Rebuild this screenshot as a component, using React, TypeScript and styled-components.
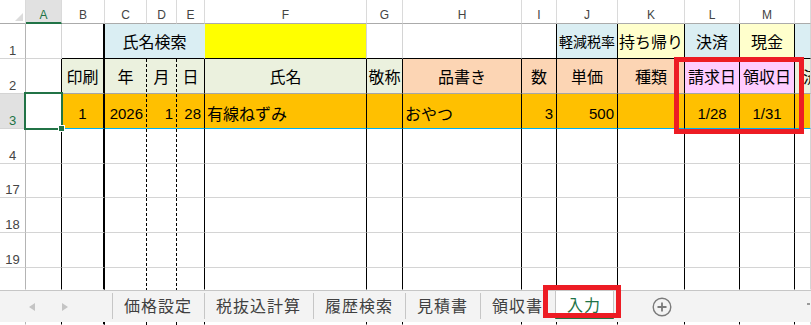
import React from "react";
import styled, { createGlobalStyle } from "styled-components";

const GREEN = "#217346";
const RED = "#ed1c24";
const GRID = "#d4d4d4";
const BLUE = "#daeef3";
const YELLOW = "#ffff00";
const CREAM = "#ffffcc";
const SAGE = "#ebf1de";
const PEACH = "#fcd5b4";
const PINK = "#ffccff";
const ORANGE = "#ffc000";

// row header + columns A..N (N is cut by the window)
const COLUMNS =
  "26px 36px 43px 42px 30px 28px 162px 36px 119px 35px 61px 67px 55px 55px 16px";
const LETTERS = ["A", "B", "C", "D", "E", "F", "G", "H", "I", "J", "K", "L", "M", ""];

type Edge = "grid" | "black" | "thick" | "dash" | "none" | "soft" | "cyan";
type Align = "left" | "center" | "right";

interface CellSpec {
  text?: string;
  bg?: string;
  right: Edge;
  bottom: Edge;
  align?: Align;
  num?: boolean;
  size?: number;
  span?: number;
  indent?: number;
}

// right edges of A..N below row 1
const DATA_RIGHT: Edge[] = [
  "black", "thick", "dash", "dash", "black", "black", "black",
  "black", "black", "black", "black", "black", "black", "grid",
];

const edge = (e: Edge) => {
  switch (e) {
    case "black":
      return "1px solid #000";
    case "thick":
      return "2px solid #000";
    case "soft":
      return "1px solid #a6a6a6";
    case "cyan":
      return "1px solid #00b0f0";
    case "dash":
    case "none":
      return "1px solid transparent";
    default:
      return `1px solid ${GRID}`;
  }
};

const GlobalStyle = createGlobalStyle`
  html, body {
    margin: 0;
    padding: 0;
    background: #fff;
    overflow: hidden;
  }
`;

const Sheet = styled.div`
  position: relative;
  width: 811px;
  height: 325px;
  overflow: hidden;
  background: #fff;
`;

const Row = styled.div<{ $h: number }>`
  display: grid;
  grid-template-columns: ${COLUMNS};
  height: ${(p) => p.$h}px;
`;

const Corner = styled.div`
  box-sizing: border-box;
  display: flex;
  align-items: flex-end;
  justify-content: flex-end;
  padding: 0 2px 2px 0;
  border-right: 1px solid #dadada;
  border-bottom: 1px solid #ababab;
`;

const ColHead = styled.div<{ $active?: boolean }>`
  box-sizing: border-box;
  display: flex;
  align-items: flex-end;
  justify-content: center;
  padding-bottom: ${(p) => (p.$active ? 1 : 2)}px;
  background: ${(p) => (p.$active ? "#e1e1e1" : "#fff")};
  color: ${(p) => (p.$active ? GREEN : "#444")};
  border-right: 1px solid #dadada;
  border-bottom: ${(p) => (p.$active ? `2px solid ${GREEN}` : "1px solid #ababab")};
  font: 12px/12px "Liberation Sans", Arial, sans-serif;
`;

const RowHead = styled.div<{ $active?: boolean; $open?: boolean }>`
  box-sizing: border-box;
  display: flex;
  align-items: flex-end;
  justify-content: center;
  padding-bottom: 1px;
  background: ${(p) => (p.$active ? "#e1e1e1" : "#fff")};
  color: ${(p) => (p.$active ? GREEN : "#444")};
  border-right: 1px solid #b4b4b4;
  border-bottom: 1px solid ${(p) => (p.$open ? "transparent" : GRID)};
  font: 13px/12px "Liberation Sans", Arial, sans-serif;
`;

const Cell = styled.div<{
  $bg?: string;
  $right: Edge;
  $bottom: Edge;
  $align?: Align;
  $num?: boolean;
  $size?: number;
  $span?: number;
  $indent?: number;
  $drop: number;
}>`
  box-sizing: border-box;
  grid-column: span ${(p) => p.$span ?? 1};
  display: flex;
  align-items: center;
  justify-content: ${(p) =>
    p.$align === "left" ? "flex-start" : p.$align === "right" ? "flex-end" : "center"};
  padding: ${(p) => p.$drop}px ${(p) => (p.$align === "right" ? 3 : 0)}px 0
    ${(p) => (p.$align === "left" ? p.$indent ?? 2 : 0)}px;
  overflow: hidden;
  white-space: nowrap;
  color: #000;
  font-family: ${(p) =>
    p.$num
      ? '"Liberation Sans", Arial, sans-serif'
      : '"Noto Sans CJK JP", "Noto Sans", sans-serif'};
  font-size: ${(p) => p.$size ?? (p.$num ? 15 : 16)}px;
  background: ${(p) =>
    p.$right === "dash"
      ? `linear-gradient(#000 3px, transparent 3px) right top / 1px 5px repeat-y, ${p.$bg ?? "#fff"}`
      : p.$bg ?? "#fff"};
  background-origin: border-box;
  border-right: ${(p) => edge(p.$right)};
  border-bottom: ${(p) => edge(p.$bottom)};
`;

const TabBar = styled.div`
  box-sizing: border-box;
  display: flex;
  align-items: stretch;
  height: 32px;
  background: #f3f3f3;
  border-top: 1px solid #c6c6c6;
  font-family: "Noto Sans CJK JP", "Noto Sans", sans-serif;
`;

const Nav = styled.div`
  box-sizing: border-box;
  width: 112px;
  display: flex;
  align-items: center;
  gap: 27px;
  padding-left: 29px;
`;

const Arrow = styled.span<{ $dir: "left" | "right" }>`
  width: 0;
  height: 0;
  border-top: 4px solid transparent;
  border-bottom: 4px solid transparent;
  ${(p) =>
    p.$dir === "left"
      ? "border-right: 6px solid #c4c4c4;"
      : "border-left: 6px solid #c4c4c4;"}
`;

const TabSep = styled.span`
  width: 1px;
  margin: 2px 0 3px;
  background: #c6c6c6;
`;

const Tab = styled.div`
  display: flex;
  align-items: center;
  padding: 0 12px 4px 11px;
  font-size: 16px;
  letter-spacing: 1px;
  color: #404040;
`;

const ActiveTab = styled(Tab)`
  margin-bottom: 3px;
  padding-bottom: 0;
  background: #fff;
  color: ${GREEN};
  border-left: 1px solid #c6c6c6;
  border-right: 1px solid #c6c6c6;
  border-bottom: 2px solid ${GREEN};
`;

const AddSheet = styled.div`
  display: flex;
  align-items: center;
  margin-left: 38px;
`;

const Splitter = styled.span`
  align-self: center;
  width: 3px;
  height: 2px;
  margin: 0 1px 6px auto;
  background: #9a9a9a;
`;

const Selection = styled.div`
  position: absolute;
  left: 24px;
  top: 92px;
  width: 39px;
  height: 38px;
  box-sizing: border-box;
  border: 2px solid ${GREEN};
  pointer-events: none;
`;

const FillHandle = styled.div`
  position: absolute;
  left: 58px;
  top: 125px;
  width: 7px;
  height: 7px;
  box-sizing: border-box;
  background: ${GREEN};
  border: 1px solid #fff;
`;

const Callout = styled.div<{ $x: number; $y: number; $w: number; $h: number; $t: number }>`
  position: absolute;
  left: ${(p) => p.$x}px;
  top: ${(p) => p.$y}px;
  width: ${(p) => p.$w}px;
  height: ${(p) => p.$h}px;
  box-sizing: border-box;
  border: ${(p) => p.$t}px solid ${RED};
  pointer-events: none;
`;

const row1: CellSpec[] = [
  { right: "grid", bottom: "grid" },
  { right: "thick", bottom: "black" },
  { text: "氏名検索", bg: BLUE, right: "none", bottom: "black", span: 3 },
  { bg: YELLOW, right: "grid", bottom: "black" },
  { right: "grid", bottom: "black" },
  { right: "grid", bottom: "black" },
  { right: "black", bottom: "black" },
  { text: "軽減税率", bg: BLUE, right: "black", bottom: "black", size: 14 },
  { text: "持ち帰り", bg: CREAM, right: "black", bottom: "black" },
  { text: "決済", bg: BLUE, right: "black", bottom: "black" },
  { text: "現金", bg: CREAM, right: "black", bottom: "black" },
  { bg: BLUE, right: "grid", bottom: "black" },
];

const labels: [string, string][] = [
  ["印刷", SAGE],
  ["年", SAGE],
  ["月", SAGE],
  ["日", SAGE],
  ["氏名", SAGE],
  ["敬称", SAGE],
  ["品書き", PEACH],
  ["数", PEACH],
  ["単価", PEACH],
  ["種類", PEACH],
  ["請求日", PINK],
  ["領収日", PINK],
  ["済", SAGE],
];

const row2: CellSpec[] = [
  { right: "black", bottom: "grid" },
  ...labels.map(([text, bg], i) => ({
    text,
    bg,
    right: DATA_RIGHT[i + 1],
    bottom: "soft" as Edge,
    ...(i === 12 ? { align: "left" as Align, indent: 8 } : {}),
  })),
];

const entry: Partial<CellSpec>[] = [
  { text: "1", num: true },
  { text: "2026", num: true, align: "right" },
  { text: "1", num: true, align: "right" },
  { text: "28", num: true, align: "right" },
  { text: "有線ねずみ", align: "left" },
  {},
  { text: "おやつ", align: "left" },
  { text: "3", num: true, align: "right" },
  { text: "500", num: true, align: "right" },
  {},
  { text: "1/28", num: true },
  { text: "1/31", num: true },
  {},
];

const row3: CellSpec[] = [
  { right: "black", bottom: "grid" },
  ...entry.map((c, i) => ({
    ...c,
    bg: ORANGE,
    right: DATA_RIGHT[i + 1],
    bottom: "cyan" as Edge,
  })),
];

const blank = (bottom: Edge): CellSpec[] => DATA_RIGHT.map((right) => ({ right, bottom }));

const SHEETS = ["価格設定", "税抜込計算", "履歴検索", "見積書", "領収書"];

function SheetRow({
  num,
  h,
  cells,
  active,
  open,
  drop = 0,
}: {
  num?: string;
  h: number;
  cells: CellSpec[];
  active?: boolean;
  open?: boolean;
  drop?: number;
}) {
  return (
    <Row $h={h}>
      <RowHead $active={active} $open={open}>
        {num}
      </RowHead>
      {cells.map((c, i) => (
        <Cell
          key={i}
          $bg={c.bg}
          $right={c.right}
          $bottom={c.bottom}
          $align={c.align}
          $num={c.num}
          $size={c.size}
          $span={c.span}
          $indent={c.indent}
          $drop={drop}
        >
          {c.text}
        </Cell>
      ))}
    </Row>
  );
}

export default function App() {
  return (
    <>
      <GlobalStyle />
      <Sheet>
        <Row $h={24}>
          <Corner>
            <svg width="8" height="8" viewBox="0 0 8 8">
              <polygon points="8,0 8,8 0,8" fill="#dcdcdc" />
            </svg>
          </Corner>
          {LETTERS.map((l, i) => (
            <ColHead key={i} $active={l === "A"}>
              {l}
            </ColHead>
          ))}
        </Row>
        <SheetRow num="1" h={35} cells={row1} />
        <SheetRow num="2" h={35} cells={row2} />
        <SheetRow num="3" h={35} cells={row3} active drop={4} />
        <SheetRow num="4" h={35} cells={blank("grid")} />
        <SheetRow num="17" h={34} cells={blank("grid")} />
        <SheetRow num="18" h={35} cells={blank("grid")} />
        <SheetRow num="19" h={35} cells={blank("grid")} />
        <SheetRow h={22} cells={blank("none")} open />

        <TabBar>
          <Nav>
            <Arrow $dir="left" />
            <Arrow $dir="right" />
          </Nav>
          <TabSep />
          {SHEETS.map((s, i) => (
            <React.Fragment key={s}>
              <Tab>{s}</Tab>
              {i < SHEETS.length - 1 && <TabSep />}
            </React.Fragment>
          ))}
          <ActiveTab>入力</ActiveTab>
          <AddSheet>
            <svg width="20" height="20" viewBox="0 0 20 20">
              <circle cx="10" cy="10" r="8.8" fill="none" stroke="#7a7a7a" strokeWidth="1.4" />
              <path d="M5.5 10h9M10 5.5v9" stroke="#7a7a7a" strokeWidth="1.8" />
            </svg>
          </AddSheet>
          <Splitter />
        </TabBar>

        <SheetRow h={3} cells={blank("none")} open />

        <Selection />
        <FillHandle />
        <Callout $x={674} $y={57} $w={130} $h={77} $t={5} />
        <Callout $x={543} $y={285} $w={78} $h={33} $t={5} />
      </Sheet>
    </>
  );
}
